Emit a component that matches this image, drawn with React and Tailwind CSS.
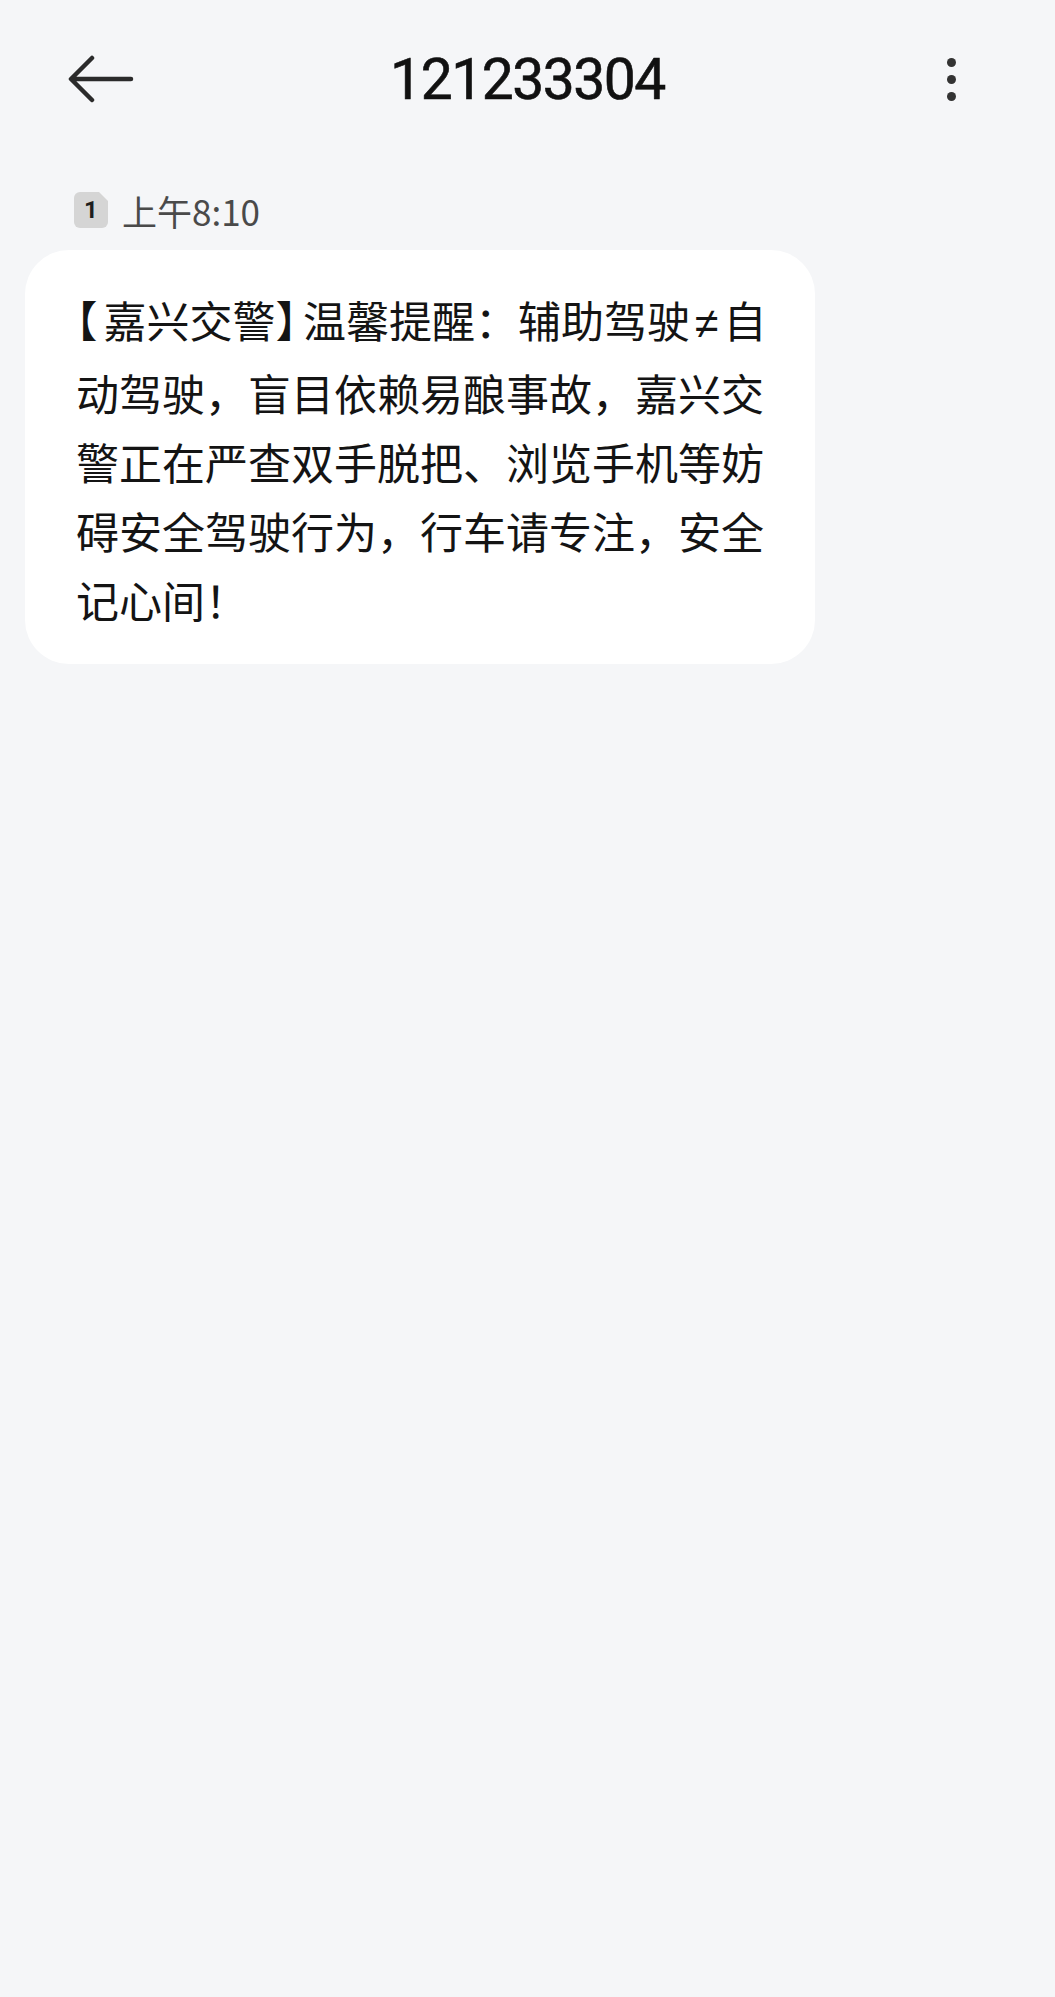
const lines = [
  "动驾驶，盲目依赖易酿事故，嘉兴交",
  "警正在严查双手脱把、浏览手机等妨",
  "碍安全驾驶行为，行车请专注，安全",
  "记心间！",
];

function BackArrow() {
  return (
    <svg width="66" height="48" viewBox="0 0 66 48" fill="none">
      <path
        d="M63 24H5M24 3L3 24l21 21"
        stroke="#2b2b2b"
        strokeWidth="4.5"
        strokeLinecap="round"
        strokeLinejoin="round"
      />
    </svg>
  );
}

export default function App() {
  return (
    <div className="min-h-[1997px] w-full bg-[#f5f6f8] font-['Noto_Sans_CJK_SC',sans-serif]">
      {/* Header */}
      <div className="h-[158px] grid grid-cols-[1fr_auto_1fr] items-center">
        <div className="pl-[68px]">
          <BackArrow />
        </div>
        <h1 className="font-['Roboto','Liberation_Sans',sans-serif] text-[57px] font-normal tracking-[-1.5px] text-[#111] leading-none [-webkit-text-stroke:0.6px_#111]">
          121233304
        </h1>
        <div className="flex justify-end pr-[99px]">
          <div className="flex flex-col items-center gap-[8px]">
            <span className="w-[9px] h-[9px] rounded-full bg-[#333]" />
            <span className="w-[9px] h-[9px] rounded-full bg-[#333]" />
            <span className="w-[9px] h-[9px] rounded-full bg-[#333]" />
          </div>
        </div>
      </div>

      {/* Timestamp */}
      <div className="mt-[32px] flex items-center pl-[74px] h-[40px]">
        <div className="relative w-[34px] h-[36px] rounded-[6px] bg-[#d5d5d5] flex items-center justify-center">
          <span className="font-['Roboto',sans-serif] font-bold text-[24px] text-[#1e1e1e] leading-none">1</span>
          <span className="absolute top-0 right-0 w-0 h-0 border-l-[9px] border-l-transparent border-t-[9px] border-t-[#f5f6f8]" />
        </div>
        <span className="ml-[14px] text-[35px] text-[#4a4a4a] leading-none">上午8:10</span>
      </div>

      {/* Message bubble */}
      <div className="mt-[20px] ml-[25px] w-[790px] bg-white rounded-[44px] pl-[51px] pt-[35px] pb-[30px]">
        <div className="text-[43px] leading-[69px] text-[#141414] whitespace-nowrap">
          <span className="[font-feature-settings:'halt'] tracking-[6px]">【</span>嘉兴交警
          <span className="[font-feature-settings:'halt'] tracking-[6px]">】</span>温馨提醒：辅助驾驶
          <span className="font-['Liberation_Sans',sans-serif] px-[5px]">≠</span>自
        </div>
        {lines.map((l) => (
          <div key={l} className="text-[43px] leading-[69px] text-[#141414] whitespace-nowrap">
            {l}
          </div>
        ))}
      </div>
    </div>
  );
}
